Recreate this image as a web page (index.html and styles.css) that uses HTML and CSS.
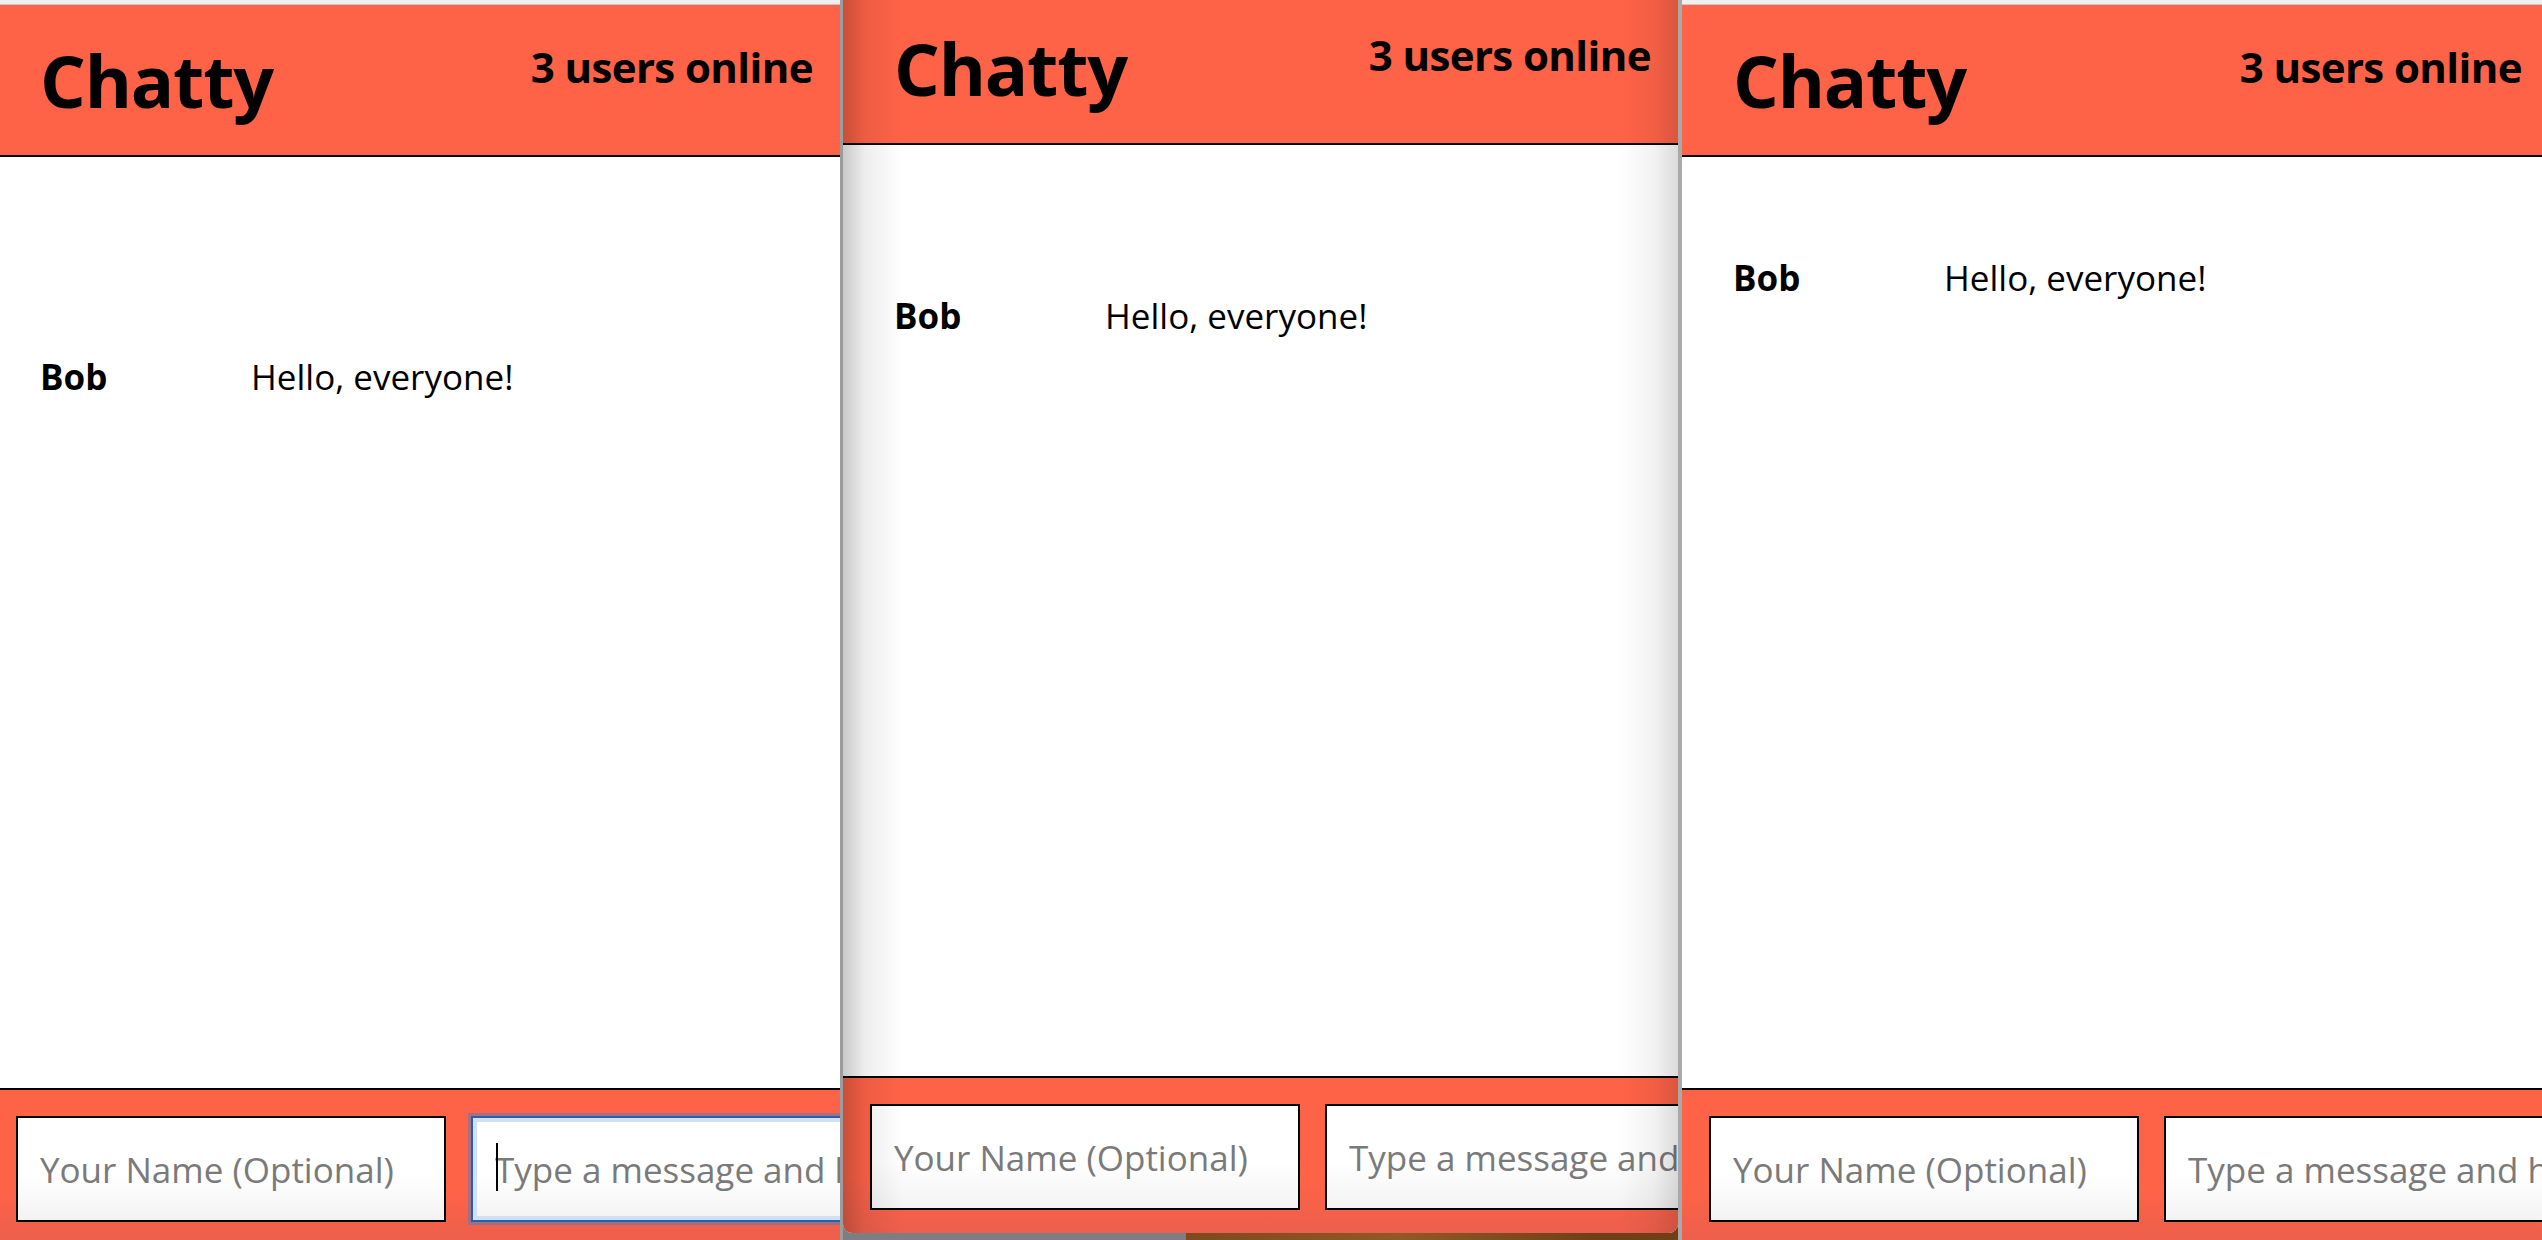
FILE: index.html
```html
<!DOCTYPE html>
<html lang="en">
<head>
<meta charset="utf-8">
<title>Chatty</title>
<link rel="stylesheet" href="styles.css">
</head>
<body>
<div class="desktop">
  <section class="win win--left">
    <div class="strip"></div>
    <div class="app app--left">
      <header class="navbar">
        <h1 class="brand">Chatty</h1>
        <span class="online">3 users online</span>
      </header>
      <main class="messages messages--a">
        <div class="message">
          <span class="username">Bob</span>
          <span class="content">Hello, everyone!</span>
        </div>
      </main>
      <footer class="chatbar">
        <input class="field field--name" type="text" placeholder="Your Name (Optional)">
        <div class="field-wrap">
          <input class="field field--msg field--focus" type="text" placeholder="Type a message and hit ENTER">
          <span class="caret"></span>
        </div>
      </footer>
    </div>
  </section>

  <section class="win win--mid">
    <div class="app app--mid">
      <header class="navbar">
        <h1 class="brand">Chatty</h1>
        <span class="online">3 users online</span>
      </header>
      <main class="messages messages--b">
        <div class="message">
          <span class="username">Bob</span>
          <span class="content">Hello, everyone!</span>
        </div>
      </main>
      <footer class="chatbar chatbar--mid">
        <input class="field field--name" type="text" placeholder="Your Name (Optional)">
        <div class="field-wrap">
          <input class="field field--msg" type="text" placeholder="Type a message and hit ENTER">
        </div>
      </footer>
    </div>
  </section>

  <section class="win win--right">
    <div class="strip"></div>
    <div class="app app--right">
      <header class="navbar">
        <h1 class="brand">Chatty</h1>
        <span class="online">3 users online</span>
      </header>
      <main class="messages messages--c">
        <div class="message">
          <span class="username">Bob</span>
          <span class="content">Hello, everyone!</span>
        </div>
      </main>
      <footer class="chatbar">
        <input class="field field--name" type="text" placeholder="Your Name (Optional)">
        <div class="field-wrap">
          <input class="field field--msg" type="text" placeholder="Type a message and hit ENTER">
        </div>
      </footer>
    </div>
  </section>
</div>
</body>
</html>
```

FILE: styles.css
```css
* { box-sizing: border-box; }

html, body {
  margin: 0;
  padding: 0;
  width: 2542px;
  height: 1240px;
  overflow: hidden;
}

body {
  font-family: "Open Sans", "DejaVu Sans", sans-serif;
  color: #000;
  background: linear-gradient(to right, #7b7e83 0, #7b7e83 1186px, #7d4a1f 1186px, #8f5a26 1400px, #6e3f18 1600px, #7d4a1f 2542px);
}

.desktop {
  display: flex;
  align-items: flex-start;
  width: 2542px;
  height: 1240px;
  overflow: hidden;
}

.win {
  flex-shrink: 0;
  display: flex;
  flex-direction: column;
  height: 1240px;
  overflow: hidden;
  background: #fff;
}

.win--left {
  width: 843px;
  border-right: 3px solid #9c9c9c;
  position: relative;
  z-index: 2;
}

.win--mid {
  width: 835px;
  height: 1240px;
  margin-top: -7px;
  border-radius: 0 0 9px 9px;
  position: relative;
  z-index: 1;
}

.win--mid::after {
  content: "";
  position: absolute;
  inset: 0;
  pointer-events: none;
  background: linear-gradient(to right,
    rgba(0,0,0,0.21) 0,
    rgba(0,0,0,0.07) 22px,
    rgba(0,0,0,0) 60px,
    rgba(0,0,0,0) calc(100% - 60px),
    rgba(0,0,0,0.05) calc(100% - 24px),
    rgba(0,0,0,0.14) 100%);
}

.win--right {
  width: 871px;
  border-left: 4px solid #a9a9a9;
  position: relative;
  z-index: 2;
}

.strip {
  flex-shrink: 0;
  height: 5px;
  background: #efefef;
  border-bottom: 1px solid #c9c9c9;
}

.app {
  flex: 1;
  display: flex;
  flex-direction: column;
  min-height: 0;
}

.app--left { width: 851px; margin-left: -11px; }
.app--mid { width: 835px; }
.app--right { width: 867px; }

.navbar {
  flex-shrink: 0;
  height: 152px;
  display: flex;
  justify-content: space-between;
  align-items: flex-start;
  padding: 0 27px 0 51px;
  background: #ff6347;
  border-bottom: 2px solid #000;
}

.brand {
  margin: 39px 0 0;
  font-size: 72px;
  line-height: 1;
  font-weight: 700;
  letter-spacing: -1.2px;
}

.online {
  margin-top: 41px;
  font-size: 42px;
  line-height: 1;
  font-weight: 700;
  letter-spacing: -0.6px;
}

.messages {
  flex: 1;
  min-height: 0;
  padding-left: 51px;
  background: #fff;
}

.messages--a { padding-top: 196px; }
.messages--b { padding-top: 147px; }
.messages--c { padding-top: 97px; }

.message {
  display: flex;
  font-size: 35px;
  line-height: normal;
}

.username {
  width: 211px;
  font-weight: 700;
  flex-shrink: 0;
}

.content {
  font-weight: 400;
}

.chatbar {
  flex-shrink: 0;
  height: 152px;
  display: flex;
  align-items: flex-start;
  gap: 25px;
  padding: 26px 0 0 27px;
  border-top: 2px solid #000;
  background: linear-gradient(to bottom, #ff6347 0, #ff6347 65%, #ec5f4b 100%);
  overflow: hidden;
}

.chatbar--mid {
  height: 157px;
}

.field-wrap {
  position: relative;
  flex-shrink: 0;
}

.field {
  display: block;
  flex-shrink: 0;
  height: 106px;
  padding: 0 22px;
  border: 2px solid #000;
  border-radius: 0;
  outline: none;
  font-family: "Open Sans", "DejaVu Sans", sans-serif;
  font-size: 35px;
  color: #000;
  background: linear-gradient(to bottom, #ffffff 0, #ffffff 55%, #f3f3f3 100%);
}

.field::placeholder {
  color: #7a7a7a;
  opacity: 1;
}

.field--name { width: 430px; }
.field--msg { width: 820px; }

.field--focus {
  border: 2px solid #2d5fa6;
  box-shadow: inset 0 0 0 4px #cde1f8, 0 0 0 3px rgba(86,126,190,0.55);
}

.caret {
  position: absolute;
  left: 25px;
  top: 27px;
  width: 2px;
  height: 48px;
  background: #000;
}
```
